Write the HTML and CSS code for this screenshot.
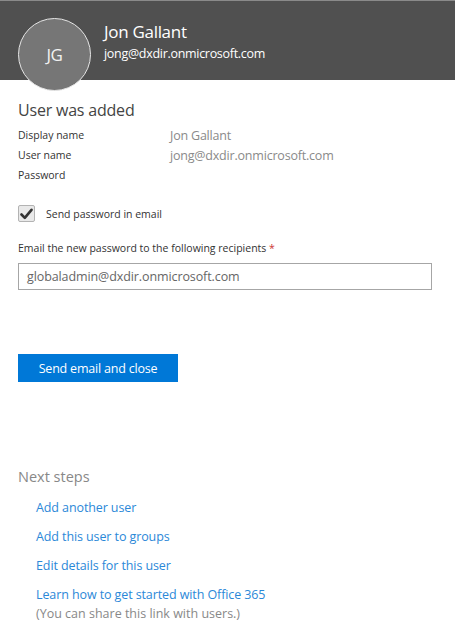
FILE: index.html
```html
<!DOCTYPE html>
<html>
<head>
<meta charset="utf-8">
<link rel="stylesheet" href="styles.css">
</head>
<body>
<header class="header">
  <div class="avatar">JG</div>
  <div class="ident">
    <div class="ident-name">Jon Gallant</div>
    <div class="ident-mail">jong@dxdir.onmicrosoft.com</div>
  </div>
</header>
<main class="content">
  <h1 class="title">User was added</h1>
  <div class="details">
    <div class="label">Display name</div><div class="value">Jon Gallant</div>
    <div class="label">User name</div><div class="value">jong@dxdir.onmicrosoft.com</div>
    <div class="label">Password</div><div class="value"></div>
  </div>
  <label class="check-row">
    <span class="checkbox"><svg width="13" height="12" viewBox="0 0 13 12"><path d="M1.5 6.5 L4.8 9.8 L11.5 1.8" fill="none" stroke="#333" stroke-width="2.6" stroke-linecap="round" stroke-linejoin="round"/></svg></span>
    <span class="check-label">Send password in email</span>
  </label>
  <div class="field-label">Email the new password to the following recipients <span class="req">*</span></div>
  <div class="input">globaladmin@dxdir.onmicrosoft.com</div>
  <button class="primary">Send email and close</button>
  <h2 class="next">Next steps</h2>
  <ul class="links">
    <li><a>Add another user</a></li>
    <li><a>Add this user to groups</a></li>
    <li><a>Edit details for this user</a></li>
    <li><a>Learn how to get started with Office 365</a><div class="note">(You can share this link with users.)</div></li>
  </ul>
</main>
</body>
</html>
```
FILE: styles.css
```css
* { box-sizing: border-box; }
body {
  margin: 0;
  background: #fff;
  font-family: "Segoe UI", "Open Sans", "Noto Sans", sans-serif;
  color: #333;
}
.header {
  height: 80px;
  background: #505050;
  border-top: 1px solid #8a8a8a;
  display: flex;
  align-items: flex-start;
  padding: 17px 0 0 18px;
}
.avatar {
  flex: none;
  width: 73px;
  height: 73px;
  border-radius: 50%;
  background: #767676;
  border: 1px solid #e6e6e6;
  color: #f2f2f2;
  font-size: 17px;
  display: flex;
  align-items: center;
  justify-content: center;
  letter-spacing: -0.5px;
}
.ident {
  margin-left: 13px;
  margin-top: 2px;
  color: #fff;
}
.ident-name {
  font-size: 17px;
  line-height: 24px;
  letter-spacing: -0.3px;
}
.ident-mail {
  font-size: 12.5px;
  line-height: 18px;
  margin-top: 1px;
  letter-spacing: -0.3px;
}
.content {
  padding: 0 18px;
}
.title {
  margin: 19px 0 0;
  font-size: 16px;
  font-weight: normal;
  line-height: 22px;
  color: #444;
  letter-spacing: -0.2px;
}
.details {
  display: grid;
  grid-template-columns: 152px 1fr;
  grid-auto-rows: 20px;
  margin-top: 4px;
  align-items: center;
}
.label {
  font-size: 10.5px;
  color: #333;
}
.value {
  font-size: 12.5px;
  color: #8a8a8a;
  letter-spacing: -0.2px;
}
.check-row {
  display: flex;
  align-items: center;
  margin-top: 20px;
}
.checkbox {
  width: 17px;
  height: 17px;
  border: 1px solid #b3b3b3;
  border-radius: 2px;
  background: #e9e9e9;
  display: flex;
  align-items: center;
  justify-content: center;
}
.check-label {
  margin-left: 11px;
  font-size: 10.5px;
  color: #333;
}
.field-label {
  margin-top: 19px;
  font-size: 10.5px;
  color: #333;
}
.req { color: #c33; }
.input {
  margin-top: 8px;
  width: 414px;
  height: 27px;
  border: 1px solid #a6a6a6;
  padding: 0 8px;
  font-size: 12.5px;
  line-height: 25px;
  color: #666;
  letter-spacing: -0.1px;
}
.primary {
  display: block;
  margin-top: 64px;
  width: 160px;
  height: 28px;
  border: none;
  background: #0078d7;
  color: #fff;
  font-family: inherit;
  font-size: 12.5px;
  padding: 0;
  letter-spacing: -0.2px;
}
.next {
  margin: 85px 0 0;
  font-size: 14.5px;
  font-weight: normal;
  color: #888;
  line-height: 20px;
}
.links {
  list-style: none;
  margin: 12px 0 0;
  padding: 0 0 0 18px;
}
.links li {
  font-size: 12.5px;
  line-height: 18px;
  margin-bottom: 11px;
}
.links a {
  color: #2b88d8;
  letter-spacing: -0.1px;
}
.note {
  color: #888;
  line-height: 19px;
}
```
